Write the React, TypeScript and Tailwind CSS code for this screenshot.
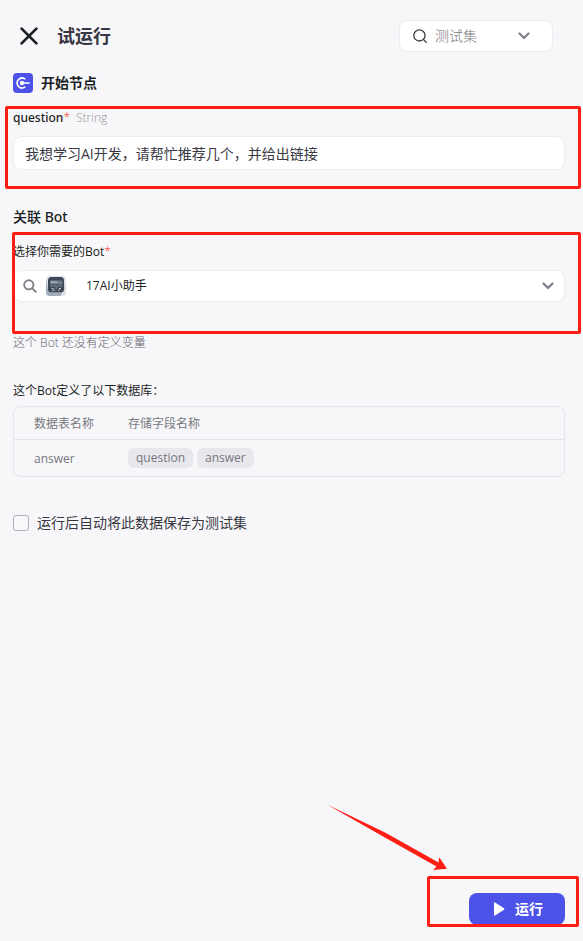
import React from 'react'

interface IconProps {
  className?: string,
}

interface HighlightProps {
  className: string,
}

const CloseIcon = ({className}: IconProps) => (
  <svg className={className} viewBox="0 0 18 18" fill="none" stroke="currentColor" strokeWidth="2.7" strokeLinecap="round" aria-hidden="true">
    <path d="M1.6 1.6L16.4 16.4M16.4 1.6L1.6 16.4" />
  </svg>
)

const SearchIcon = ({className}: IconProps) => (
  <svg className={className} viewBox="0 0 14 14" fill="none" stroke="currentColor" strokeLinecap="round" aria-hidden="true">
    <circle cx="6.4" cy="6.4" r="5.6" />
    <path d="M10.6 10.6L13.2 13.2" />
  </svg>
)

const BoldSearchIcon = ({className}: IconProps) => (
  <svg className={className} viewBox="0 0 14 14" fill="none" stroke="currentColor" strokeWidth="1.9" strokeLinecap="round" aria-hidden="true">
    <circle cx="5.8" cy="5.8" r="4.6" />
    <path d="M9.3 9.3L12.8 12.8" />
  </svg>
)

const ChevronIcon = ({className}: IconProps) => (
  <svg className={className} viewBox="0 0 12 8" fill="none" stroke="currentColor" strokeWidth="2.2" strokeLinecap="round" strokeLinejoin="round" aria-hidden="true">
    <path d="M1.5 1.5L6 6L10.5 1.5" />
  </svg>
)

const StartNodeIcon = ({className}: IconProps) => (
  <svg className={className} viewBox="0 0 20 20" fill="none" aria-hidden="true">
    <rect width="20" height="20" rx="4" fill="#4d53e8" />
    <path d="M11.8 5.9A4.9 4.9 0 1 0 11.8 14.1" stroke="#fff" strokeWidth="1.6" strokeLinecap="round" />
    <circle cx="9" cy="10" r="2.2" fill="#fff" />
    <path d="M9 10H16.2" stroke="#fff" strokeWidth="1.5" strokeLinecap="round" />
  </svg>
)

const BotAvatar = ({className}: IconProps) => (
  <svg className={className} viewBox="0 0 20 20" aria-hidden="true">
    <rect width="20" height="20" rx="4" fill="#dde1e7" />
    <path d="M0 3L2 14L5 17H14L18 14L20 8L14.5 20H4Q0 20 0 16Z" fill="#a3acba" />
    <rect x="2" y="1" width="16" height="15.5" rx="3.5" fill="#3c4654" />
    <rect x="4" y="4.5" width="12.5" height="4" rx="1" fill="#74808f" />
    <path d="M4.5 6H11" stroke="#bcc4cf" strokeWidth="1" />
    <path d="M4 10H16.5" stroke="#929dac" strokeWidth="0.8" />
    <path d="M5.5 12.5H7.5M9.5 12H11M13 12.5H15M6 14.2H9M12 14H14" stroke="#c3cad4" strokeWidth="1" />
  </svg>
)

const Highlight = ({className}: HighlightProps) => (
  <div className={`absolute pointer-events-none border-3 border-[#ff1e14] rounded-xs ${className}`}></div>
)

const fields = ['question', 'answer']

const App = () => {
  return (
    <main className="flex min-h-screen flex-col bg-[#f7f7fa] pt-5 pr-[18px] pb-4 pl-[13px] font-['Open_Sans','Noto_Sans_CJK_SC',sans-serif] text-xs text-[#1c1f23]">
      <header className="flex items-center pr-3 pl-[7px]">
        <button type="button" aria-label="关闭" className="mr-[19px] text-[#1c1f23]">
          <CloseIcon className="size-[18px]" />
        </button>
        <h1 className="text-lg leading-8 font-bold text-[#383743]">试运行</h1>
        <div className="ml-auto flex h-8 w-[154px] items-center rounded-lg border border-[#ececf0] bg-white pr-[22px] pl-[13px]">
          <SearchIcon className="size-3.5 flex-none stroke-[1.3] text-[#383743]" />
          <select aria-label="测试集" className="min-w-0 grow appearance-none bg-transparent pl-2 text-sm font-light text-[#77777f] outline-none">
            <option>测试集</option>
          </select>
          <ChevronIcon className="h-2 w-3 flex-none text-[#80808a]" />
        </div>
      </header>

      <div className="mt-[21px] flex items-center gap-2">
        <StartNodeIcon className="size-5" />
        <h2 className="text-sm leading-5 font-bold">开始节点</h2>
      </div>

      <section className="relative mt-[13px] pt-1 pb-[19px]">
        <label htmlFor="question" className="block leading-4">
          <span className="font-['Noto_Sans',sans-serif] font-medium">question</span>
          <span className="font-light text-[#f93920]">*</span>
          <span className="ml-1.5 font-light text-[#94949d]">String</span>
        </label>
        <input
          id="question"
          type="text"
          defaultValue="我想学习AI开发，请帮忙推荐几个，并给出链接"
          className="mt-[10px] block h-[34px] w-full rounded-lg border border-[#ececf0] bg-white px-[11px] text-sm text-[#383743] outline-none"
        />
        <Highlight className="inset-y-0 -right-4 -left-2" />
      </section>

      <h2 className="mt-4 font-['Noto_Sans','Noto_Sans_CJK_SC',sans-serif] text-sm leading-6 font-medium">关联 Bot</h2>

      <section className="relative mt-[3px] pt-3 pb-8">
        <label htmlFor="bot" className="block leading-4">
          选择你需要的Bot<span className="font-light text-[#f93920]">*</span>
        </label>
        <div className="mt-[10px] flex h-8 items-center rounded-lg border border-[#ececf0] bg-white pr-[10px] pl-[9px]">
          <BoldSearchIcon className="size-3.5 flex-none text-[#80808a]" />
          <BotAvatar className="ml-[9px] size-5 flex-none" />
          <select id="bot" className="min-w-0 grow appearance-none bg-transparent pl-5 text-xs text-[#1c1f23] outline-none">
            <option>17AI小助手</option>
          </select>
          <ChevronIcon className="h-2 w-3 flex-none text-[#80808a]" />
        </div>
        <Highlight className="inset-y-0 -right-4 -left-px" />
      </section>

      <p className="mt-px leading-4 font-light text-[#66666e]">这个 Bot 还没有定义变量</p>

      <p className="mt-8 leading-4">这个Bot定义了以下数据库：</p>
      <div className="mt-[7px] rounded-lg border border-[#e4e4e9]">
        <table className="w-full border-separate border-spacing-0 text-left text-[#77777f]">
          <thead>
            <tr className="h-[33px]">
              <th className="w-[114px] border-b border-[#e4e4e9] pt-0.5 pl-5 font-normal">数据表名称</th>
              <th className="border-b border-[#e4e4e9] pt-0.5 font-normal">存储字段名称</th>
            </tr>
          </thead>
          <tbody>
            <tr className="h-9">
              <td className="pt-0.5 pl-5">answer</td>
              <td>
                <div className="flex gap-1">
                  {fields.map((field) => (
                    <span key={field} className="rounded-md bg-[#e7e7ec] px-2 leading-5">{field}</span>
                  ))}
                </div>
              </td>
            </tr>
          </tbody>
        </table>
      </div>

      <label className="mt-9 flex items-center gap-2 self-start text-sm leading-5 text-[#383743]">
        <input type="checkbox" className="size-4 appearance-none rounded-[3px] border border-[#b2b2ba] bg-[#f9f9fb] checked:bg-[#4d53e8]" />
        运行后自动将此数据保存为测试集
      </label>

      <footer className="mt-auto flex justify-end">
        <div className="relative">
          <button type="button" className="flex h-8 w-24 items-center justify-center gap-2 rounded-lg bg-[#4d53e8] text-sm font-bold text-white">
            <svg className="size-4" viewBox="0 0 16 16" fill="currentColor" aria-hidden="true">
              <path d="M3 2Q3 0.8 4.1 1.5L13 7.2Q13.9 8 13 8.8L4.1 14.5Q3 15.2 3 14Z" />
            </svg>
            运行
          </button>
          <Highlight className="-top-[17px] -right-[14px] -bottom-0.5 -left-[42px]" />
          <svg className="pointer-events-none absolute right-[117px] bottom-[54px] h-[68px] w-[122px]" viewBox="0 0 122 68" fill="#ff1e14" aria-hidden="true">
            <path d="M1 1.5L60 30L112.5 59.5L113.2 54.2L121 65.8L107 67L110.5 63.5L58 34Z" />
          </svg>
        </div>
      </footer>
    </main>
  )
}

export default App
